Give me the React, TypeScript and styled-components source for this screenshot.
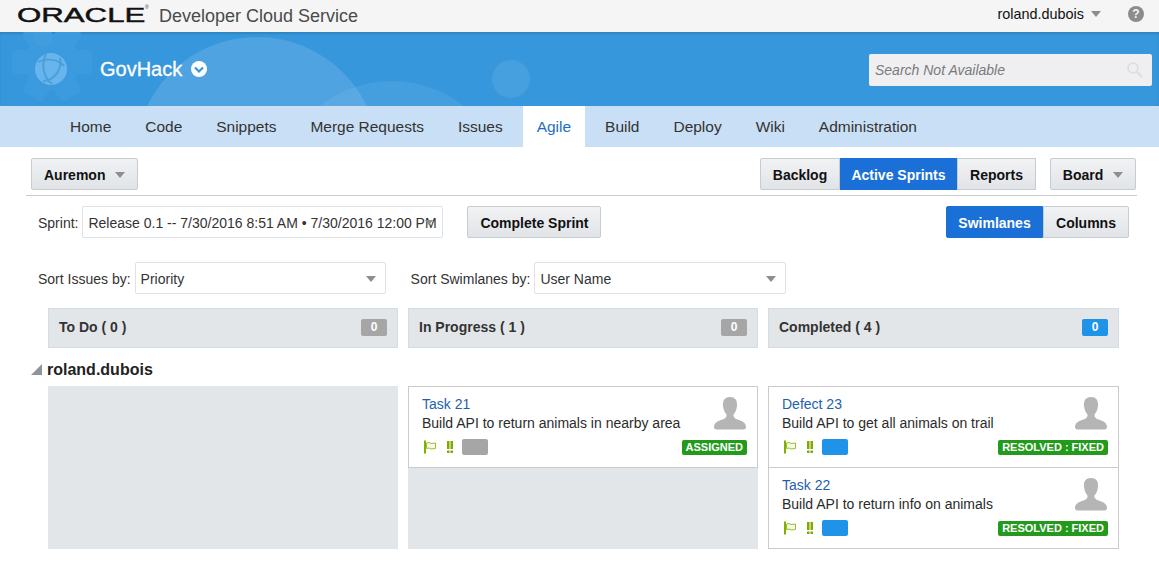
import { createGlobalStyle, styled } from 'styled-components';

const GlobalStyle = createGlobalStyle`
	html, body {
		margin: 0;
		padding: 0;
		background: #fff;
	}
	body {
		font-family: 'Liberation Sans', Arial, sans-serif;
		color: #1f1f1f;
		overflow: hidden;
	}
`;

const Page = styled.div`
	width: 1159px;
	height: 562px;
	overflow: hidden;
	background: #fff;
`;

const BrandBar = styled.header`
	display: flex;
	align-items: center;
	height: 32px;
	padding: 0 15px 0 17px;
	background: #f5f5f5;
	box-sizing: border-box;
`;

const OracleMark = styled.span`
	display: inline-block;
	width: 128px;
	margin-bottom: 3px;
	font-size: 20px;
	line-height: 20px;
	font-weight: 400;
	color: #111;
	-webkit-text-stroke: 0.45px #111;
	transform: scaleX(1.56);
	transform-origin: left center;
	white-space: nowrap;
`;

const Registered = styled.span`
	align-self: flex-start;
	width: 4px;
	margin-top: 5px;
	font-size: 5px;
	line-height: 5px;
	color: #333;
`;

const ProductName = styled.span`
	margin-left: 10px;
	font-size: 18px;
	color: #4a4a4a;
`;

const UserMenu = styled.div`
	display: flex;
	align-items: center;
	margin-left: auto;
	margin-bottom: 5px;
	font-size: 14.4px;
	color: #111;
`;

const Caret = styled.i<{ $size?: number }>`
	display: inline-block;
	width: 0;
	height: 0;
	border-left: ${({ $size = 5 }) => $size}px solid transparent;
	border-right: ${({ $size = 5 }) => $size}px solid transparent;
	border-top: ${({ $size = 5 }) => $size + 1}px solid #8e8e8e;
`;

const UserCaret = styled(Caret)`
	margin-left: 7px;
`;

const HelpIcon = styled.span`
	display: flex;
	align-items: center;
	justify-content: center;
	width: 16px;
	height: 16px;
	margin-left: 27px;
	border-radius: 50%;
	background: #8c8c8c;
	color: #f5f5f5;
	font-size: 12px;
	font-weight: 700;
`;

const ProjectHeader = styled.div`
	position: relative;
	display: flex;
	align-items: center;
	height: 74px;
	padding: 0 7px 0 35px;
	background: #3797dc;
	box-shadow: inset 0 2px 2px rgba(0, 0, 0, 0.12);
	box-sizing: border-box;
	overflow: hidden;
`;

const HeaderArt = styled.svg`
	position: absolute;
	left: 0;
	top: 0;
`;

const ProjectLogo = styled.svg`
	position: relative;
	flex: none;
`;

const ProjectName = styled.span`
	position: relative;
	margin-left: 33px;
	font-size: 20px;
	font-weight: 400;
	color: #fff;
	-webkit-text-stroke: 0.3px #fff;
`;

const ProjectChevron = styled.svg`
	position: relative;
	margin-left: 9px;
`;

const SearchBox = styled.div`
	position: relative;
	display: flex;
	align-items: center;
	justify-content: space-between;
	width: 283px;
	height: 32px;
	margin: 2px 0 0 auto;
	padding: 0 8px 0 6px;
	border-radius: 2px;
	background: #efeff1;
	box-sizing: border-box;
	font-size: 14px;
	font-style: italic;
	color: #7a7a7a;
`;

const NavBar = styled.nav`
	display: flex;
	height: 41px;
	padding-left: 53px;
	background: #c8dff5;
	box-sizing: border-box;
`;

const NavItem = styled.a<{ $active?: boolean }>`
	display: flex;
	align-items: center;
	margin: 0 ${({ $active }) => ($active ? 3 : 2)}px;
	padding: 1px ${({ $active }) => ($active ? 14 : 15)}px 0;
	font-size: 15.47px;
	color: ${({ $active }) => ($active ? '#1a6fc4' : '#333')};
	background: ${({ $active }) => ($active ? '#fff' : 'transparent')};
`;

const Content = styled.main`
	padding: 11px 22px 0 31px;
`;

const Toolbar = styled.div`
	display: flex;
	align-items: flex-start;
	justify-content: space-between;
	height: 38px;
	margin-left: -5px;
	padding: 0 1px 0 5px;
	border-bottom: 1px solid #c9cdd0;
	box-sizing: border-box;
`;

const ToolGroup = styled.div`
	display: flex;
	align-items: center;
`;

const Button = styled.button<{ $active?: boolean; $width?: number }>`
	display: flex;
	align-items: center;
	justify-content: center;
	width: ${({ $width }) => ($width ? `${$width}px` : 'auto')};
	height: 32px;
	padding: 1px 12px 0;
	border: 1px solid ${({ $active }) => ($active ? '#1a70d6' : '#c6ccd1')};
	border-radius: 2px;
	background: ${({ $active }) => ($active ? '#1a70d6' : 'linear-gradient(#f0f2f4, #e1e4e7)')};
	color: ${({ $active }) => ($active ? '#fff' : '#111')};
	font-family: inherit;
	font-size: 14px;
	font-weight: 700;
	box-sizing: border-box;
	white-space: nowrap;
`;

const SegmentButton = styled(Button)`
	padding: 1px 0 0;
	border-radius: 0;
	&:first-child {
		border-radius: 2px 0 0 2px;
	}
	&:last-child {
		border-radius: 0 2px 2px 0;
	}
`;

const ButtonCaret = styled(Caret)`
	margin-left: 10px;
`;

const BoardMenu = styled(Button)`
	margin-left: 14px;
`;

const SprintRow = styled.div`
	display: flex;
	align-items: center;
	height: 32px;
	margin-top: 10px;
	padding-left: 7px;
`;

const FieldLabel = styled.label`
	margin-right: 4px;
	padding-top: 2px;
	font-size: 14px;
	color: #333;
	white-space: nowrap;
`;

const SelectBox = styled.div<{ $width: number }>`
	position: relative;
	display: flex;
	align-items: center;
	width: ${({ $width }) => $width}px;
	height: 32px;
	padding: 1px 0 0 5px;
	border: 1px solid #dfe3e7;
	border-radius: 2px;
	background: #fff;
	box-sizing: border-box;
	font-size: 14px;
	color: #333;
	white-space: nowrap;
`;

const SelectCaret = styled(Caret)`
	position: absolute;
	right: 9px;
	top: 13px;
`;

const CompleteButton = styled(Button)`
	margin-left: 24px;
`;

const ViewSwitch = styled(ToolGroup)`
	margin-left: auto;
	margin-right: 8px;
`;

const SortRow = styled.div`
	display: flex;
	align-items: center;
	height: 32px;
	margin-top: 24px;
	padding-left: 7px;
`;

const SwimlaneSort = styled.div`
	display: flex;
	align-items: center;
	margin-left: 25px;
`;

const ColumnGrid = styled.div`
	display: grid;
	grid-template-columns: 350px 350px 351px;
	gap: 10px;
	margin: 14px 0 0 17px;
`;

const ColumnHeader = styled.div`
	display: flex;
	align-items: center;
	justify-content: space-between;
	height: 40px;
	padding: 0 10px 2px;
	border: 1px solid #d5dde4;
	background: #e3e6e9;
	box-sizing: border-box;
	font-size: 14px;
	font-weight: 700;
	color: #333;
`;

const CountBadge = styled.span<{ $blue?: boolean }>`
	width: 26px;
	height: 17px;
	border-radius: 2px;
	background: ${({ $blue }) => ($blue ? '#1f93e8' : '#a6a6a6')};
	color: #fff;
	font-size: 12px;
	line-height: 16px;
	text-align: center;
`;

const LaneTitle = styled.div`
	display: flex;
	align-items: center;
	height: 20px;
	margin-top: 11px;
	padding-top: 1px;
	box-sizing: border-box;
	font-size: 16px;
	font-weight: 700;
	color: #222;
`;

const LaneArrow = styled.svg`
	margin-right: 5px;
`;

const LaneGrid = styled(ColumnGrid)`
	margin-top: 7px;
	height: 163px;
`;

const LaneCell = styled.div`
	display: flex;
	flex-direction: column;
	background: #e3e6e9;
`;

const Card = styled.article`
	display: grid;
	grid-template-columns: 1fr auto;
	grid-template-rows: 34px auto;
	height: 82px;
	padding: 8px 10px 0 13px;
	border: 1px solid #cbcbcb;
	background: #fff;
	box-sizing: border-box;
	& + & {
		margin-top: -1px;
	}
`;

const CardText = styled.div`
	display: flex;
	flex-direction: column;
	font-size: 14px;
	line-height: 19px;
	color: #2b2b2b;
`;

const CardLink = styled.a`
	color: #1f5fae;
`;

const Avatar = styled.svg`
	margin-top: 1px;
`;

const CardFooter = styled.div`
	grid-column: 1 / span 2;
	display: flex;
	align-items: center;
	height: 18px;
	margin-top: 9px;
`;

const Swatch = styled.span<{ $color: string }>`
	width: 26px;
	height: 16px;
	margin-left: 9px;
	border-radius: 2px;
	background: ${({ $color }) => $color};
`;

const StatusBadge = styled.span`
	margin-left: auto;
	margin-top: 1px;
	padding: 0 4px;
	height: 15px;
	border-radius: 2px;
	background: #239a1c;
	color: #fff;
	font-size: 11px;
	font-weight: 700;
	line-height: 15px;
	white-space: nowrap;
`;

const FlagIcon = () => (
	<svg width="14" height="14" viewBox="0 0 14 14">
		<rect x="2" y="0.5" width="2" height="13" fill="#7fb000" />
		<path d="M4.5 3 L7 2.5 L9 3.5 L13.5 3 L13.5 8.5 L9 9 L7 8 L4.5 8.5 Z" fill="#f6f9e4" stroke="#7fb000" strokeWidth="0.8" />
	</svg>
);

const PriorityIcon = () => (
	<svg width="6" height="14" viewBox="0 0 6 14">
		<path d="M0 1 H2.5 V9 H0 Z M3.5 1 H6 V9 H3.5 Z M0 10.5 H2.5 V13 H0 Z M3.5 10.5 H6 V13 H3.5 Z" fill="#7fa800" />
	</svg>
);

const PriorityGap = styled.span`
	display: flex;
	margin-left: 11px;
`;

const AvatarIcon = () => (
	<Avatar width="34" height="34" viewBox="0 0 34 34">
		<path
			d="M17 1 C11 1 9.5 5.5 10 10 C10.5 14 12 17 13.5 18.5 C13.8 21 12.5 22.5 9.5 23.5 C5 25 1 26.5 1 31 C1 32.5 2 33.5 3.5 33.5 H30.5 C32 33.5 33 32.5 33 31 C33 26.5 29 25 24.5 23.5 C21.5 22.5 20.2 21 20.5 18.5 C22 17 23.5 14 24 10 C24.5 5.5 23 1 17 1 Z"
			fill="#b5b5b5"
		/>
	</Avatar>
);

interface IssueCardProps {
	title: string;
	summary: string;
	status: string;
	swatch: string;
}

const IssueCard = ({ title, summary, status, swatch }: IssueCardProps): JSX.Element => (
	<Card>
		<CardText>
			<CardLink>{title}</CardLink>
			<span>{summary}</span>
		</CardText>
		<AvatarIcon />
		<CardFooter>
			<FlagIcon />
			<PriorityGap>
				<PriorityIcon />
			</PriorityGap>
			<Swatch $color={swatch} />
			<StatusBadge>{status}</StatusBadge>
		</CardFooter>
	</Card>
);

const navItems = ['Home', 'Code', 'Snippets', 'Merge Requests', 'Issues', 'Agile', 'Build', 'Deploy', 'Wiki', 'Administration'];

const gearTeeth = [0, 60, 120, 180, 240, 300];

export default function App(): JSX.Element {
	return (
		<Page>
			<GlobalStyle />
			<BrandBar>
				<OracleMark>ORACLE</OracleMark>
				<Registered>®</Registered>
				<ProductName>Developer Cloud Service</ProductName>
				<UserMenu>
					roland.dubois
					<UserCaret $size={5} />
					<HelpIcon>?</HelpIcon>
				</UserMenu>
			</BrandBar>
			<ProjectHeader>
				<HeaderArt width="1159" height="74" viewBox="0 0 1159 74">
					<g fill="#3c9ade">
						<circle cx="52" cy="30" r="28" />
						{gearTeeth.map((angle) => (
							<rect key={angle} x="40" y="-10" width="24" height="20" rx="4" transform={`rotate(${angle + 30} 52 30)`} />
						))}
					</g>
					<circle cx="43" cy="5" r="10" fill="#429ddf" />
					<circle cx="257" cy="127" r="122" fill="#fff" fillOpacity="0.12" />
					<circle cx="392" cy="165" r="116" fill="#fff" fillOpacity="0.07" />
					<circle cx="511" cy="47" r="19" fill="#fff" fillOpacity="0.08" />
				</HeaderArt>
				<ProjectLogo width="32" height="34" viewBox="0 0 32 34">
					<circle cx="16" cy="17" r="16" fill="#67b5ec" />
					<g fill="none" stroke="#4a9fdc" strokeWidth="2">
						<path d="M3 10 C12 5 24 8 29 14" />
						<path d="M11 2 C6 12 8 25 17 32" />
						<path d="M25 6 C27 16 21 28 8 29" />
					</g>
				</ProjectLogo>
				<ProjectName>GovHack</ProjectName>
				<ProjectChevron width="16" height="16" viewBox="0 0 16 16">
					<circle cx="8" cy="8" r="8" fill="#fff" />
					<path d="M4 6.5 L8 10.5 L12 6.5" fill="none" stroke="#3797dc" strokeWidth="2.2" />
				</ProjectChevron>
				<SearchBox>
					Search Not Available
					<svg width="18" height="18" viewBox="0 0 18 18">
						<circle cx="7" cy="7" r="5" fill="none" stroke="#dcdcdc" strokeWidth="1.5" />
						<path d="M11 11 L16 16" stroke="#dcdcdc" strokeWidth="2" />
					</svg>
				</SearchBox>
			</ProjectHeader>
			<NavBar>
				{navItems.map((item) => (
					<NavItem key={item} $active={item === 'Agile'}>
						{item}
					</NavItem>
				))}
			</NavBar>
			<Content>
				<Toolbar>
					<Button>
						Auremon
						<ButtonCaret $size={5} />
					</Button>
					<ToolGroup>
						<SegmentButton $width={80}>Backlog</SegmentButton>
						<SegmentButton $active $width={117}>
							Active Sprints
						</SegmentButton>
						<SegmentButton $width={79}>Reports</SegmentButton>
						<BoardMenu $width={86}>
							Board
							<ButtonCaret $size={5} />
						</BoardMenu>
					</ToolGroup>
				</Toolbar>
				<SprintRow>
					<FieldLabel>Sprint:</FieldLabel>
					<SelectBox $width={361}>
						Release 0.1 -- 7/30/2016 8:51 AM • 7/30/2016 12:00 PM
						<SelectCaret $size={4} />
					</SelectBox>
					<CompleteButton $width={134}>Complete Sprint</CompleteButton>
					<ViewSwitch>
						<SegmentButton $active $width={97}>
							Swimlanes
						</SegmentButton>
						<SegmentButton $width={86}>Columns</SegmentButton>
					</ViewSwitch>
				</SprintRow>
				<SortRow>
					<FieldLabel>Sort Issues by:</FieldLabel>
					<SelectBox $width={251}>
						Priority
						<SelectCaret $size={5} />
					</SelectBox>
					<SwimlaneSort>
						<FieldLabel>Sort Swimlanes by:</FieldLabel>
						<SelectBox $width={252}>
							User Name
							<SelectCaret $size={5} />
						</SelectBox>
					</SwimlaneSort>
				</SortRow>
				<ColumnGrid>
					<ColumnHeader>
						To Do ( 0 )
						<CountBadge>0</CountBadge>
					</ColumnHeader>
					<ColumnHeader>
						In Progress ( 1 )
						<CountBadge>0</CountBadge>
					</ColumnHeader>
					<ColumnHeader>
						Completed ( 4 )
						<CountBadge $blue>0</CountBadge>
					</ColumnHeader>
				</ColumnGrid>
				<LaneTitle>
					<LaneArrow width="11" height="11" viewBox="0 0 11 11">
						<path d="M11 0 V11 H0 Z" fill="#8f9498" />
					</LaneArrow>
					roland.dubois
				</LaneTitle>
				<LaneGrid>
					<LaneCell />
					<LaneCell>
						<IssueCard title="Task 21" summary="Build API to return animals in nearby area" status="ASSIGNED" swatch="#a6a6a6" />
					</LaneCell>
					<LaneCell>
						<IssueCard title="Defect 23" summary="Build API to get all animals on trail" status="RESOLVED : FIXED" swatch="#1f93e8" />
						<IssueCard title="Task 22" summary="Build API to return info on animals" status="RESOLVED : FIXED" swatch="#1f93e8" />
					</LaneCell>
				</LaneGrid>
			</Content>
		</Page>
	);
}
